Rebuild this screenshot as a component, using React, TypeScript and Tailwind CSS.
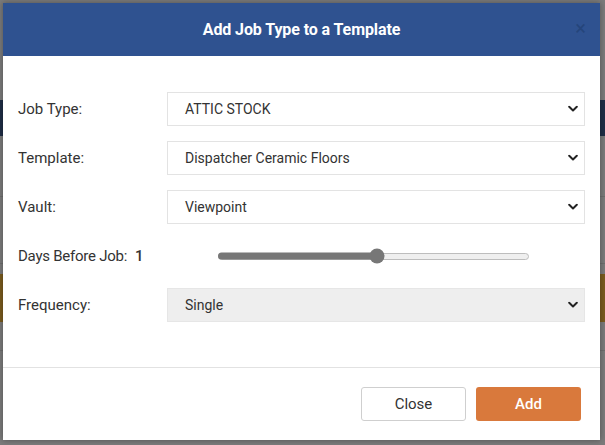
import React from "react"

const labelFont = { fontFamily: "Roboto, 'Liberation Sans', sans-serif" }

function Chevron() {
  return (
    <svg className="pointer-events-none absolute right-[6px] top-1/2 -translate-y-1/2" width="10" height="7" viewBox="0 0 10 7">
      <path d="M1.2 1.3 L5 5 L8.8 1.3" fill="none" stroke="#222" strokeWidth="2" strokeLinecap="round" strokeLinejoin="round" />
    </svg>
  )
}

function SelectBox({ value, gray }: { value: string; gray?: boolean }) {
  return (
    <div
      className={`relative flex h-[34px] flex-1 items-center border pl-[17px] text-[14px] text-[#333] ${
        gray ? "border-[#e6e6e6] bg-[#eeeeee]" : "border-[#e3e3e3] bg-white"
      }`}
    >
      <span>{value}</span>
      <Chevron />
    </div>
  )
}

function Row({ label, children }: { label: React.ReactNode; children: React.ReactNode }) {
  return (
    <div className="flex items-center">
      <div className="w-[149px] shrink-0 text-[15px] text-[#333]">{label}</div>
      {children}
    </div>
  )
}

function Slider({ value }: { value: number }) {
  return (
    <div className="relative flex h-[34px] w-[311px] items-center">
      <div className="h-[7px] w-full rounded-full border border-[#bdbdbd] bg-[#efefef]" />
      <div
        className="absolute left-0 top-1/2 h-[7px] -translate-y-1/2 rounded-l-full bg-[#777]"
        style={{ width: `${value * 100}%` }}
      />
      <div
        className="absolute top-1/2 h-[15px] w-[15px] -translate-x-1/2 -translate-y-1/2 rounded-full bg-[#777]"
        style={{ left: `${value * 100}%` }}
      />
    </div>
  )
}

export default function App() {
  return (
    <div className="relative h-[445px] w-[605px] overflow-hidden bg-[#7b7b7b]" style={labelFont}>
      {/* dimmed page behind the dialog */}
      <div className="flex flex-col">
        <div className="h-[100px]" />
        <div className="h-[36px] bg-[#1f2d46]" />
        <div className="h-[60px]" />
        <div className="h-[1px] bg-[#6e6e6e]" />
        <div className="h-[66px]" />
        <div className="h-[1px] bg-[#6e6e6e]" />
        <div className="h-[10px]" />
        <div className="h-[48px] bg-[#7a5b1e]" />
        <div className="h-[28px]" />
        <div className="h-[1px] bg-[#6e6e6e]" />
      </div>

      <div className="absolute left-[3px] top-[3px] flex h-[437px] w-[597px] flex-col bg-white shadow-[0_0_6px_rgba(0,0,0,0.35)]">
        <div className="relative flex h-[53px] items-center justify-center bg-[#2f5290]">
          <span className="text-[16px] font-bold tracking-[-0.1px] text-white">Add Job Type to a Template</span>
          <span className="absolute right-[14px] top-[15px] text-[20px] leading-none text-[#25457b]">×</span>
        </div>

        <div className="flex flex-1 flex-col gap-[15px] px-[15px] pt-[36px]">
          <Row label="Job Type:">
            <SelectBox value="ATTIC STOCK" />
          </Row>
          <Row label="Template:">
            <SelectBox value="Dispatcher Ceramic Floors" />
          </Row>
          <Row label="Vault:">
            <SelectBox value="Viewpoint" />
          </Row>
          <div className="flex items-center">
            <div className="w-[200px] shrink-0 text-[15px] tracking-[-0.25px] text-[#333]">
              Days Before Job:<span className="ml-[8px] font-medium">1</span>
            </div>
            <Slider value={0.51} />
          </div>
          <Row label="Frequency:">
            <SelectBox value="Single" gray />
          </Row>
        </div>

        <div className="flex h-[73px] items-start justify-end gap-[10px] border-t border-[#e2e2e2] pr-[19px] pt-[19px]">
          <button className="h-[34px] w-[105px] rounded-[3px] border border-[#cfcfcf] bg-white text-[15px] text-[#333]">
            Close
          </button>
          <button className="h-[34px] w-[105px] rounded-[3px] bg-[#d9793c] text-[15px] font-medium text-white">
            Add
          </button>
        </div>
      </div>
    </div>
  )
}
